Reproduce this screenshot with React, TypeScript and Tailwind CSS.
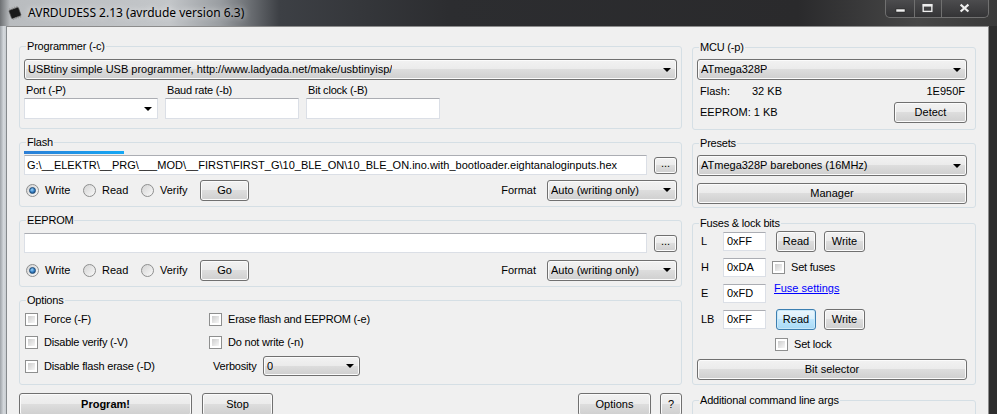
import React from 'react';
import clsx from 'clsx';

// win7 "aero" look-alike controls
const chrome =
    'rounded-[3px] border border-[#707070] bg-[linear-gradient(#f2f2f2_0%,#ebebeb_49%,#dddddd_50%,#cfcfcf_100%)] shadow-[inset_0_0_0_1px_#fbfbfb]';
const chromeFocus =
    'rounded-[3px] border border-[#3c7fb1] bg-[linear-gradient(#eaf6fd_0%,#d9f0fc_49%,#bee6fd_50%,#a7d9f5_100%)] shadow-[inset_0_0_0_1px_#c9e8f8]';
const field = 'border border-[#dbdfe6] border-t-[#abadb3] bg-white';

type Kids = { children?: React.ReactNode; className?: string };

const Button = ({ children, className, focused }: Kids & { focused?: boolean }) => (
    <div className={clsx('flex shrink-0 items-center justify-center', focused ? chromeFocus : chrome, className)}>
        {children}
    </div>
);

const Arrow = () => <span className="h-0 w-0 shrink-0 border-x-[4px] border-t-[4px] border-x-transparent border-t-black" />;

const Combo = ({ value, className, editable }: { value?: string; className?: string; editable?: boolean }) => (
    <div className={clsx('flex shrink-0 items-center justify-between pl-[3px] pr-[5px]', editable ? field : chrome, className)}>
        <span className="truncate">{value}</span>
        <Arrow />
    </div>
);

const TextBox = ({ value, className }: { value?: string; className?: string }) => (
    <div className={clsx('flex shrink-0 items-center overflow-hidden whitespace-nowrap pl-[2px]', field, className)}>{value}</div>
);

const Radio = ({ label, checked, className }: { label: string; checked?: boolean; className?: string }) => (
    <div className={clsx('flex items-center', className)}>
        <span className="flex h-[13px] w-[13px] items-center justify-center rounded-full border border-[#8e8f8f] bg-[linear-gradient(135deg,#d4d4d4,#f9f9f9)]">
            {checked && (
                <span className="h-[7px] w-[7px] rounded-full border border-[#1d4a76] bg-[radial-gradient(circle_at_40%_35%,#9ad4fb,#2f79c0_55%,#173e66)]" />
            )}
        </span>
        <span className="ml-[6px]">{label}</span>
    </div>
);

const Check = ({ label, className }: { label?: string; className?: string }) => (
    <div className={clsx('flex items-center', className)}>
        <span className="h-[13px] w-[13px] shrink-0 border border-[#8e8f8f] bg-white p-[2px]">
            <span className="block h-full w-full bg-[linear-gradient(135deg,#cdcdcd,#f7f7f7)]" />
        </span>
        {label && <span className="ml-[6px] whitespace-nowrap tracking-[-0.2px]">{label}</span>}
    </div>
);

const Group = ({ title, children, className }: Kids & { title: string }) => (
    <fieldset className={clsx('rounded-[3px] border border-[#d5dfe5]', className)}>
        <legend className="ml-[2px] px-[1px] text-[11px] leading-[13px] tracking-[-0.2px]">{title}</legend>
        {children}
    </fieldset>
);

const ChipIcon = () => (
    <svg width="16" height="14" viewBox="0 0 16 14">
        <g transform="rotate(-20 8 7)">
            <rect x="3" y="2.5" width="10" height="9" rx="1" fill="#1b1b1b" stroke="#555" strokeWidth="0.6" />
            {[4.5, 7, 9.5, 12].map((x) => (
                <g key={x}>
                    <rect x={x - 0.6} y="0.8" width="1.2" height="1.7" fill="#9a9a9a" />
                    <rect x={x - 0.6} y="11.5" width="1.2" height="1.7" fill="#9a9a9a" />
                </g>
            ))}
        </g>
    </svg>
);

const WindowButtons = () => (
    <div className="ml-auto mr-[8px] flex h-[18px] overflow-hidden rounded-b-[5px] border border-t-0 border-[#707070] bg-[linear-gradient(#4c4c4e,#343436)]">
        <div className="flex w-[28px] items-center justify-center">
            <svg width="28" height="17" viewBox="0 0 28 17">
                <rect x="10" y="9" width="9" height="3" fill="#eeeeee" stroke="#1a1a1a" strokeWidth="0.5" />
            </svg>
        </div>
        <div className="flex w-[27px] items-center justify-center border-l border-[#707070]">
            <svg width="27" height="17" viewBox="0 0 27 17">
                <rect x="8.5" y="4.5" width="9" height="7" fill="none" stroke="#eeeeee" strokeWidth="1.4" />
                <rect x="8" y="4" width="10" height="2.5" fill="#eeeeee" />
            </svg>
        </div>
        <div className="flex w-[47px] items-center justify-center border-l border-[#707070]">
            <svg width="47" height="17" viewBox="0 0 47 17">
                <path d="M19 4.5 L27 11.5 M27 4.5 L19 11.5" stroke="#eeeeee" strokeWidth="2.2" />
            </svg>
        </div>
    </div>
);

const MemoryRow = () => (
    <div className="flex h-[22px] items-center">
        <Radio label="Write" checked className="w-[59px] pl-[2px]" />
        <Radio label="Read" className="w-[58px]" />
        <Radio label="Verify" className="w-[59px]" />
        <Button className="h-[21px] w-[49px]">Go</Button>
        <span className="ml-auto mr-[11px]">Format</span>
        <Combo className="h-[21px] w-[130px]" value="Auto (writing only)" />
    </div>
);

const App = () => {
    const flashPath =
        'G:\\__ELEKTR\\__PRG\\___MOD\\__FIRST\\FIRST_G\\10_BLE_ON\\10_BLE_ON.ino.with_bootloader.eightanaloginputs.hex';

    return (
        <div className="flex h-[414px] w-[997px] flex-col overflow-hidden bg-[#2c2c2e] font-['Liberation_Sans',Arial,sans-serif] text-[11px] leading-[13px] text-black">
            {/* title bar */}
            <div className="flex h-[26px] shrink-0 items-start bg-[linear-gradient(90deg,#6d7073_0%,#b9bcbf_1%,#c3c6c9_17%,#9a9ea2_22%,#3d4045_28%,#2c2d30_45%,#2a2a2c_80%,#474747_92%,#3a3a3a_100%)]">
                <div className="ml-[7px] mt-[6px]">
                    <ChipIcon />
                </div>
                <span className="ml-[5px] mt-[4px] font-['Noto_Sans',sans-serif] text-[12px] leading-[17px] text-black [text-shadow:0_0_6px_rgba(255,255,255,0.95)]">
                    AVRDUDESS 2.13 (avrdude version 6.3)
                </span>
                <WindowButtons />
            </div>

            <div className="flex min-h-0 flex-1">
                <div className="w-[7px] shrink-0 border-r border-[#85898c] bg-[linear-gradient(90deg,#9ea3a8,#d4d8dc_60%,#c9cdd1)]" />

                {/* client area */}
                <div className="flex flex-1 border-r border-t border-[#8c8c8c] bg-[#f0f0f0] pl-[12px]">
                    {/* left column */}
                    <div className="flex w-[663px] shrink-0 flex-col pt-[13px]">
                        <Group title="Programmer (-c)" className="px-[4px] pb-[9px]">
                            <Combo
                                className="mt-[6px] h-[21px] w-full"
                                value="USBtiny simple USB programmer, http://www.ladyada.net/make/usbtinyisp/"
                            />
                            <div className="mt-[4px] flex gap-[7px]">
                                <div className="flex w-[134px] flex-col">
                                    <span className="pl-[2px] tracking-[-0.2px]">Port (-P)</span>
                                    <Combo editable className="mt-[1px] h-[21px] w-full" />
                                </div>
                                <div className="flex w-[134px] flex-col">
                                    <span className="pl-[2px] tracking-[-0.2px]">Baud rate (-b)</span>
                                    <TextBox className="mt-[1px] h-[21px] w-full" />
                                </div>
                                <div className="flex w-[134px] flex-col">
                                    <span className="pl-[2px] tracking-[-0.2px]">Bit clock (-B)</span>
                                    <TextBox className="mt-[1px] h-[21px] w-full" />
                                </div>
                            </div>
                        </Group>

                        <Group title="Flash" className="mt-[7px] px-[4px] pb-[5px]">
                            <div className="mt-[2px] h-[3px] w-[100px] bg-[linear-gradient(90deg,#2d7fd6,#14a8f5)]" />
                            <div className="mt-[1px] flex items-center">
                                <TextBox className="h-[20px] flex-1" value={flashPath} />
                                <Button className="ml-[7px] h-[17px] w-[23px] pb-[4px]">...</Button>
                            </div>
                            <div className="mt-[4px]">
                                <MemoryRow />
                            </div>
                        </Group>

                        <Group title="EEPROM" className="mt-[7px] px-[4px] pb-[5px]">
                            <div className="mt-[6px] flex items-center">
                                <TextBox className="h-[20px] flex-1" />
                                <Button className="ml-[7px] h-[17px] w-[23px] pb-[4px]">...</Button>
                            </div>
                            <div className="mt-[6px]">
                                <MemoryRow />
                            </div>
                        </Group>

                        <Group title="Options" className="mt-[7px] px-[4px] pb-[6px]">
                            <div className="mt-[1px] grid grid-cols-[184px_1fr] pl-[1px]">
                                <div className="flex h-[23px] items-center">
                                    <Check label="Force (-F)" />
                                </div>
                                <div className="flex h-[23px] items-center">
                                    <Check label="Erase flash and EEPROM (-e)" />
                                </div>
                                <div className="flex h-[23px] items-center">
                                    <Check label="Disable verify (-V)" />
                                </div>
                                <div className="flex h-[23px] items-center">
                                    <Check label="Do not write (-n)" />
                                </div>
                                <div className="flex h-[24px] items-center">
                                    <Check label="Disable flash erase (-D)" />
                                </div>
                                <div className="flex h-[24px] items-center pl-[4px]">
                                    <span className="w-[50px] tracking-[-0.2px]">Verbosity</span>
                                    <Combo className="h-[20px] w-[97px]" value="0" />
                                </div>
                            </div>
                        </Group>

                        <div className="mt-[8px] flex">
                            <Button className="h-[23px] w-[173px] font-bold">Program!</Button>
                            <Button className="ml-[10px] h-[23px] w-[71px]">Stop</Button>
                            <Button className="ml-auto h-[23px] w-[73px]">Options</Button>
                            <Button className="ml-[9px] h-[23px] w-[22px]">?</Button>
                        </div>
                    </div>

                    {/* right column */}
                    <div className="ml-[10px] flex w-[284px] shrink-0 flex-col pt-[14px]">
                        <Group title="MCU (-p)" className="pb-[6px] pl-[4px] pr-[8px]">
                            <Combo className="mt-[5px] h-[21px] w-full" value="ATmega328P" />
                            <div className="mt-[5px] flex h-[13px] items-center pl-[3px]">
                                <span className="w-[52px]">Flash:</span>
                                <span>32 KB</span>
                                <span className="ml-auto mr-[2px]">1E950F</span>
                            </div>
                            <div className="mt-[4px] flex h-[21px] items-center pl-[3px]">
                                <span>EEPROM: 1 KB</span>
                                <Button className="ml-auto h-[21px] w-[73px]">Detect</Button>
                            </div>
                        </Group>

                        <Group title="Presets" className="mt-[7px] pb-[3px] pl-[4px] pr-[8px]">
                            <Combo className="mt-[5px] h-[21px] w-full" value="ATmega328P barebones (16MHz)" />
                            <Button className="mt-[7px] h-[21px] w-full">Manager</Button>
                        </Group>

                        <Group title="Fuses & lock bits" className="mt-[9px] pb-[4px] pl-[4px] pr-[8px]">
                            <div className="mt-[1px] flex h-[20px] items-center">
                                <span className="w-[26px] pl-[4px]">L</span>
                                <TextBox className="h-[19px] w-[43px] pl-[3px]" value="0xFF" />
                                <Button className="ml-[10px] h-[21px] w-[40px]">Read</Button>
                                <Button className="ml-[8px] h-[21px] w-[41px]">Write</Button>
                            </div>
                            <div className="mt-[6px] flex h-[20px] items-center">
                                <span className="w-[26px] pl-[4px]">H</span>
                                <TextBox className="h-[19px] w-[43px] pl-[3px]" value="0xDA" />
                                <Check label="Set fuses" className="ml-[6px]" />
                            </div>
                            <div className="mt-[6px] flex h-[20px] items-center">
                                <span className="w-[26px] pl-[4px]">E</span>
                                <TextBox className="h-[19px] w-[43px] pl-[3px]" value="0xFD" />
                                <span className="-mt-[1px] ml-[8px] self-start text-[#0000ff] underline">Fuse settings</span>
                            </div>
                            <div className="mt-[6px] flex h-[20px] items-center">
                                <span className="w-[26px] pl-[4px]">LB</span>
                                <TextBox className="h-[19px] w-[43px] pl-[3px]" value="0xFF" />
                                <Button focused className="ml-[10px] h-[21px] w-[40px]">
                                    Read
                                </Button>
                                <Button className="ml-[8px] h-[21px] w-[41px]">Write</Button>
                            </div>
                            <div className="mt-[6px] flex h-[18px] items-center pl-[78px]">
                                <Check label="Set lock" />
                            </div>
                            <Button className="mt-[6px] h-[21px] w-full">Bit selector</Button>
                        </Group>

                        <Group title="Additional command line args" className="mt-[9px] h-[40px] shrink-0 pl-[4px] pr-[8px]" />
                    </div>
                </div>

                <div className="w-[8px] shrink-0 bg-[#2e2e2e]" />
            </div>
        </div>
    );
};

export default App;
